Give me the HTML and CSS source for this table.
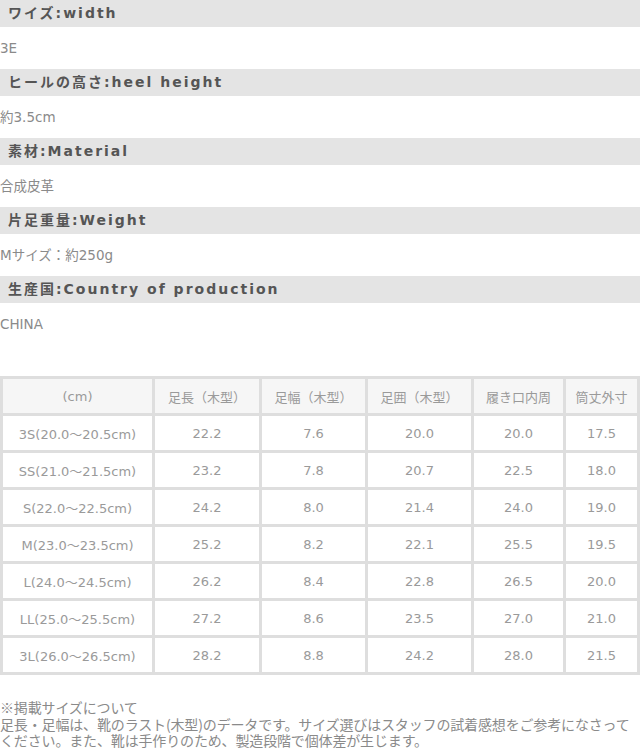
FILE: index.html
```html
<!DOCTYPE html>
<html lang="ja">
<head>
<meta charset="utf-8">
<link rel="stylesheet" href="styles.css">
</head>
<body>
<div class="specs">
  <div class="spec-title">ワイズ:width</div>
  <div class="spec-value">3E</div>
  <div class="spec-title">ヒールの高さ:heel height</div>
  <div class="spec-value">約3.5cm</div>
  <div class="spec-title">素材:Material</div>
  <div class="spec-value">合成皮革</div>
  <div class="spec-title">片足重量:Weight</div>
  <div class="spec-value">Mサイズ：約250g</div>
  <div class="spec-title">生産国:Country of production</div>
  <div class="spec-value">CHINA</div>
</div>
<table class="size-table">
  <colgroup>
    <col class="c1"><col class="c2"><col class="c3"><col class="c4"><col class="c5"><col class="c6">
  </colgroup>
  <thead>
    <tr><th>(cm)</th><th>足長（木型）</th><th>足幅（木型）</th><th>足囲（木型）</th><th>履き口内周</th><th>筒丈外寸</th></tr>
  </thead>
  <tbody>
    <tr><td>3S(20.0～20.5cm)</td><td>22.2</td><td>7.6</td><td>20.0</td><td>20.0</td><td>17.5</td></tr>
    <tr><td>SS(21.0～21.5cm)</td><td>23.2</td><td>7.8</td><td>20.7</td><td>22.5</td><td>18.0</td></tr>
    <tr><td>S(22.0～22.5cm)</td><td>24.2</td><td>8.0</td><td>21.4</td><td>24.0</td><td>19.0</td></tr>
    <tr><td>M(23.0～23.5cm)</td><td>25.2</td><td>8.2</td><td>22.1</td><td>25.5</td><td>19.5</td></tr>
    <tr><td>L(24.0～24.5cm)</td><td>26.2</td><td>8.4</td><td>22.8</td><td>26.5</td><td>20.0</td></tr>
    <tr><td>LL(25.0～25.5cm)</td><td>27.2</td><td>8.6</td><td>23.5</td><td>27.0</td><td>21.0</td></tr>
    <tr><td>3L(26.0～26.5cm)</td><td>28.2</td><td>8.8</td><td>24.2</td><td>28.0</td><td>21.5</td></tr>
  </tbody>
</table>
<p class="note">※掲載サイズについて<br>足長・足幅は、靴のラスト(木型)のデータです。サイズ選びはスタッフの試着感想をご参考になさって<br>ください。また、靴は手作りのため、製造段階で個体差が生じます。</p>
</body>
</html>
```
FILE: styles.css
```css
html, body {
  margin: 0;
  padding: 0;
  background: #ffffff;
}
body {
  width: 640px;
  font-family: "DejaVu Sans", "Noto Sans CJK JP", sans-serif;
}
.specs {
  display: flex;
  flex-direction: column;
}
.spec-title {
  height: 27px;
  line-height: 27px;
  padding-left: 8px;
  background: #e4e4e4;
  color: #555555;
  font-size: 14px;
  font-weight: bold;
  letter-spacing: 2px;
  white-space: nowrap;
}
.spec-value {
  height: 42px;
  line-height: 42px;
  color: #8a8a8a;
  font-size: 13.5px;
  white-space: nowrap;
}
.size-table {
  margin-top: 31px;
  width: 640px;
  table-layout: fixed;
  border-collapse: separate;
  border-spacing: 3px;
  background: #dedede;
}
.c1 { width: 149px; }
.c2 { width: 104px; }
.c3 { width: 103px; }
.c4 { width: 103px; }
.c5 { width: 89px; }
.c6 { width: 71px; }
.size-table th,
.size-table td {
  height: 34px;
  padding: 0;
  text-align: center;
  vertical-align: middle;
  font-size: 13px;
  font-weight: normal;
  color: #9a9a9a;
  white-space: nowrap;
  background: #ffffff;
}
.size-table th {
  background: #f6f6f6;
}
.note {
  margin: 24px 0 0;
  font-family: "Noto Sans CJK JP", sans-serif;
  font-size: 14px;
  line-height: 16.5px;
  color: #8a8a8a;
  white-space: nowrap;
  letter-spacing: -0.15px;
}
```
